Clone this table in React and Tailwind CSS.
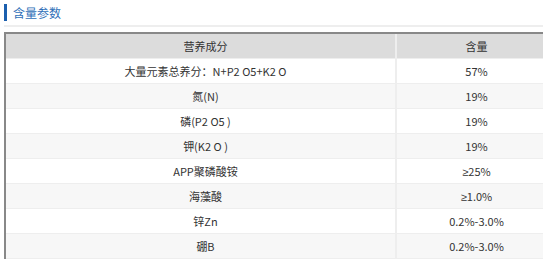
const rows = [
  ['大量元素总养分：N+P2 O5+K2 O', '57%'],
  ['氮(N)', '19%'],
  ['磷(P2 O5 )', '19%'],
  ['钾(K2 O )', '19%'],
  ['APP聚磷酸铵', '≥25%'],
  ['海藻酸', '≥1.0%'],
  ['锌Zn', '0.2%-3.0%'],
  ['硼B', '0.2%-3.0%'],
]

// the ≥ sign is narrow in the reference, not full width
const Value = ({ text }) =>
  text.startsWith('≥') ? (
    <>
      <span className="font-['Liberation_Sans',sans-serif]">≥</span>
      {text.slice(1)}
    </>
  ) : (
    text
  )

const App = () => {
  return (
    <div className="w-[550px] h-[263px] overflow-hidden bg-white font-['Noto_Sans_CJK_SC',sans-serif] text-[#333]">
      <div className="pl-[4px] pr-[7px] pt-[4px]">
        {/* title */}
        <div className="flex items-center h-[17px] gap-[6px]">
          <div className="w-[3px] h-full bg-[#1b5fae]" />
          <span className="text-[12px] leading-[17px] text-[#2f6fb8]">含量参数</span>
        </div>
        <div className="mt-[4px] border-b-2 border-[#eeeeee]" />

        {/* table */}
        <div className="mt-[5px] border-t-2 border-l-2 border-[#888]">
          <div className="grid grid-cols-[389px_2px_1fr] h-[24px] bg-[#dcdcdc] text-[11px] leading-[24px]">
            <div className="text-center pl-[10px]">营养成分</div>
            <div className="bg-[#eeeeee]" />
            <div className="text-center pl-[13px]">含量</div>
          </div>
          {rows.map((row, index) => (
            <div
              key={index}
              className={`grid grid-cols-[389px_2px_1fr] h-[25px] border-t border-[#eeeeee] text-[11px] leading-[24px] ${index % 2 === 1 ? 'bg-[#f7f7f7]' : 'bg-white'}`}
            >
              <div className="text-center pl-[10px]">{row[0]}</div>
              <div className="bg-[#eeeeee]" />
              <div className="text-center pl-[13px]"><Value text={row[1]} /></div>
            </div>
          ))}
          <div className="border-t border-[#eeeeee]" />
        </div>
      </div>
    </div>
  );
}

export default App;
